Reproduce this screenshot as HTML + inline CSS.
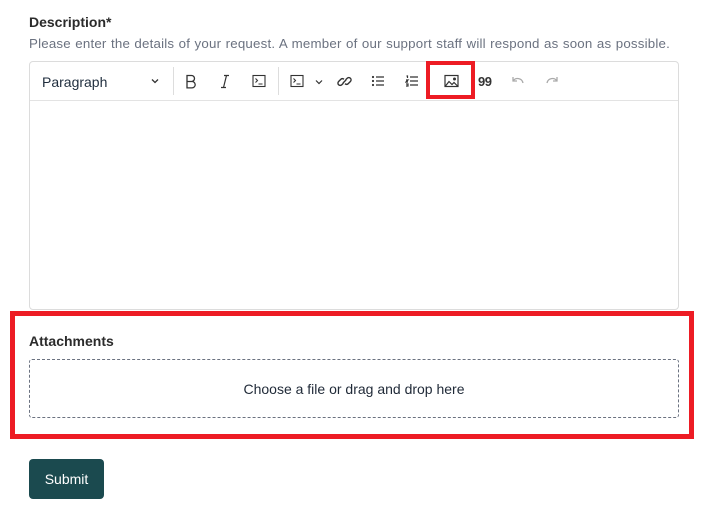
<!DOCTYPE html>
<html><head><meta charset="utf-8"><style>
*{box-sizing:border-box;margin:0;padding:0}
body{width:725px;height:523px;background:#fff;font-family:"Liberation Sans",sans-serif;color:#1f2937;position:relative;overflow:hidden}
.abs{position:absolute}
svg{display:block}
.ic{position:absolute;top:73px}
</style></head><body>
<div class="abs" style="left:29px;top:14px;font-size:14px;font-weight:bold;color:#2b2b2b">Description*</div>
<div class="abs" style="left:29px;top:36px;font-size:13.3px;color:#6b7280;white-space:nowrap;letter-spacing:0.2px;word-spacing:0.5px">Please enter the details of your request. A member of our support staff will respond as soon as possible.</div>
<div class="abs" style="left:29px;top:61px;width:650px;height:249px;border:1px solid #dcdcdc;border-radius:4px"></div>
<div class="abs" style="left:30px;top:100px;width:648px;height:1px;background:#e3e3e3"></div>
<div class="abs" style="left:42px;top:74px;font-size:14px;color:#1f2d3d">Paragraph</div>
<svg class="ic" style="left:151px;top:78px" width="8" height="6" viewBox="0 0 8 6" fill="none" stroke="#333" stroke-width="1.3"><path d="M1 1.5l3 3 3-3"/></svg>
<div class="abs" style="left:173px;top:67px;width:1px;height:28px;background:#ddd"></div>
<div class="abs" style="left:278px;top:67px;width:1px;height:28px;background:#ddd"></div>
<svg class="ic" style="left:185px;top:74px" width="12" height="15" viewBox="0 0 12 15" fill="none" stroke="#333" stroke-width="1.3"><path d="M2 1.5h4.5a3 3 0 010 6H2zM2 7.5h5a3.2 3.2 0 010 6.4H2z"/></svg>
<svg class="ic" style="left:219px;top:74px" width="12" height="15" viewBox="0 0 12 15" fill="none" stroke="#333" stroke-width="1.2"><path d="M5 1.5h5M2 13.5h5M7.5 1.5l-3 12"/></svg>
<svg class="ic" style="left:252px;top:74px" width="14" height="14" viewBox="0 0 14 14" fill="none" stroke="#333" stroke-width="1.1"><rect x="1" y="1.5" width="12" height="11"/><path d="M3.5 4.5l2 2-2 2M6.5 10h4"/></svg>
<svg class="ic" style="left:290px;top:74px" width="14" height="14" viewBox="0 0 14 14" fill="none" stroke="#333" stroke-width="1.1"><rect x="1" y="1.5" width="12" height="11"/><path d="M3.5 4.5l2 2-2 2M6.5 10h4"/></svg>
<svg class="ic" style="left:315px;top:79px" width="8" height="6" viewBox="0 0 8 6" fill="none" stroke="#333" stroke-width="1.2"><path d="M1 1.5l3 3 3-3"/></svg>
<svg class="ic" style="left:337px;top:74px" width="15" height="15" viewBox="0 0 14 14" fill="none" stroke="#333" stroke-width="1.3"><path d="M6 8.5l-1.5 1.5a2 2 0 01-3-3l2-2a2 2 0 013 0M8 5.5l1.5-1.5a2 2 0 013 3l-2 2a2 2 0 01-3 0M5.5 8.5l3-3"/></svg>
<svg class="ic" style="left:371px;top:74px" width="14" height="14" viewBox="0 0 14 14" stroke="#333" stroke-width="1.3"><path d="M5 3h8M5 7h8M5 11h8"/><circle cx="2" cy="3" r="1.1" fill="#333" stroke="none"/><circle cx="2" cy="7" r="1.1" fill="#333" stroke="none"/><circle cx="2" cy="11" r="1.1" fill="#333" stroke="none"/></svg>
<svg class="ic" style="left:405px;top:74px" width="14" height="14" viewBox="0 0 14 14" fill="none" stroke="#333" stroke-width="1.2"><path d="M5 3h8M5 7h8M5 11h8M1.5 2h1v2M1 6h2l-2 2h2M1 10h2v2H1"/></svg>
<svg class="ic" style="left:444px;top:74px" width="15" height="14" viewBox="0 0 15 14" fill="none" stroke="#333" stroke-width="1.2"><rect x="1" y="1.5" width="13" height="11"/><path d="M1.5 12l3.5-4.5 3 3 2-2 3.5 3.5"/><circle cx="10.5" cy="5" r=".9" fill="#333"/></svg>
<div class="abs" style="left:478px;top:74px;font-size:13px;font-weight:bold;color:#333;letter-spacing:-0.5px">99</div>
<svg class="ic" style="left:511px;top:74px" width="14" height="14" viewBox="0 0 14 14" fill="none" stroke="#aaa" stroke-width="1.3"><path d="M2 3v4h4M2 7a5.5 5.5 0 0110 2"/></svg>
<svg class="ic" style="left:545px;top:74px" width="14" height="14" viewBox="0 0 14 14" fill="none" stroke="#aaa" stroke-width="1.3"><path d="M12 3v4H8M12 7a5.5 5.5 0 00-10 2"/></svg>
<div class="abs" style="left:426px;top:61px;width:49px;height:38px;border:4px solid #ed1c24"></div>
<div class="abs" style="left:10px;top:311px;width:684px;height:128px;border:5px solid #ed1c24"></div>
<div class="abs" style="left:29px;top:333px;font-size:14px;font-weight:bold;color:#2b2b2b">Attachments</div>
<div class="abs" style="left:29px;top:359px;width:650px;height:59px;border:1px dashed #6b7280;border-radius:3px;display:flex;align-items:center;justify-content:center;font-size:14px;color:#1f2937">Choose a file or drag and drop here</div>
<div class="abs" style="left:29px;top:459px;width:75px;height:40px;background:#1b4a4f;border-radius:4px;color:#fff;font-size:14px;display:flex;align-items:center;justify-content:center">Submit</div>
</body></html>
